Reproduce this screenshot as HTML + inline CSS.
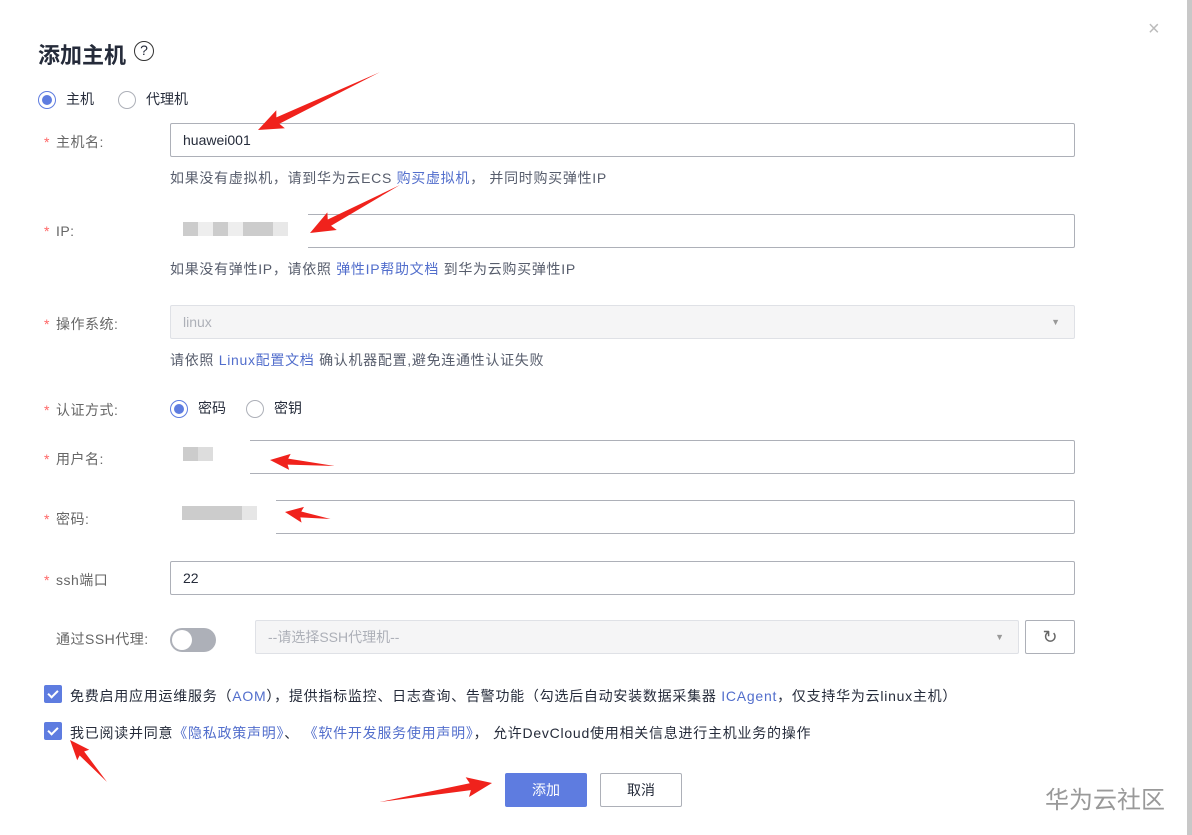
<!DOCTYPE html>
<html><head><meta charset="utf-8"><style>
*{box-sizing:border-box;margin:0;padding:0}
body{width:1192px;height:835px;background:#fff;font-family:"Liberation Sans","Noto Sans CJK SC",sans-serif;font-size:14px;color:#252b3a;position:relative;overflow:hidden}
.a{position:absolute}
.lbl{position:absolute;left:44px;color:#666;font-size:14px;letter-spacing:0.5px}
.lbl b{color:#f66;font-weight:normal;margin-right:6px}
.inp{position:absolute;left:170px;width:905px;height:34px;border:1px solid #adb0b8;border-radius:2px;padding-left:12px;line-height:32px;font-size:14px}
.hint{position:absolute;left:170px;color:#575d6c;font-size:14px;letter-spacing:0.7px}
.lk{color:#526ecc}
.radio{display:inline-block;width:18px;height:18px;border-radius:50%;border:1px solid #adb0b8;vertical-align:middle;position:relative;margin-right:10px}
.radio.on{border-color:#5e7ce0}
.radio.on:after{content:"";position:absolute;left:3px;top:3px;width:10px;height:10px;border-radius:50%;background:#5e7ce0}
.cb{position:absolute;left:44px;width:18px;height:18px;background:#5e7ce0;border-radius:2px}
.cb:after{content:"";position:absolute;left:6px;top:3px;width:4px;height:8px;border:solid #fff;border-width:0 2px 2px 0;transform:rotate(45deg)}
.t{letter-spacing:0.75px}
</style></head><body>
<div class="a" style="left:38px;top:38px;font-size:22px;font-weight:bold;color:#252b3a">添加主机</div>
<div class="a" style="left:134px;top:41px;width:20px;height:20px;border:1.5px solid #333;border-radius:50%;font-size:14px;text-align:center;line-height:17px">?</div>
<div class="a" style="left:1148px;top:18px;color:#bbb;font-size:20px">×</div>
<div class="a" style="left:1187px;top:0;width:5px;height:835px;background:#c8c8c8"></div>

<div class="a" style="left:38px;top:89px"><span class="radio on"></span>主机<span style="display:inline-block;width:24px"></span><span class="radio"></span>代理机</div>

<div class="lbl" style="top:132px"><b>*</b>主机名:</div>
<div class="inp" style="top:123px">huawei001</div>
<div class="hint" style="top:168px">如果没有虚拟机，请到华为云ECS <span class="lk">购买虚拟机</span>， 并同时购买弹性IP</div>

<div class="lbl" style="top:223px"><b>*</b>IP:</div>
<div class="inp" style="top:214px"></div>
<div class="a" style="left:168px;top:208px;width:140px;height:44px;background:#fff"></div>
<div class="a" style="left:183px;top:222px;width:105px;height:14px;background:linear-gradient(90deg,#ccc 0 15px,#eee 15px 30px,#ccc 30px 45px,#eee 45px 60px,#ccc 60px 90px,#e8e8e8 90px)"></div>
<div class="hint" style="top:259px">如果没有弹性IP，请依照 <span class="lk">弹性IP帮助文档</span> 到华为云购买弹性IP</div>

<div class="lbl" style="top:314px"><b>*</b>操作系统:</div>
<div class="inp" style="top:305px;background:#f5f5f6;border-color:#dfe1e6;color:#adb0b8">linux<span style="position:absolute;right:14px;top:0;font-size:9px;color:#999">▼</span></div>
<div class="hint" style="top:350px">请依照 <span class="lk">Linux配置文档</span> 确认机器配置,避免连通性认证失败</div>

<div class="lbl" style="top:400px"><b>*</b>认证方式:</div>
<div class="a" style="left:170px;top:398px"><span class="radio on"></span>密码<span style="display:inline-block;width:20px"></span><span class="radio"></span>密钥</div>

<div class="lbl" style="top:449px"><b>*</b>用户名:</div>
<div class="inp" style="top:440px"></div>
<div class="a" style="left:168px;top:436px;width:82px;height:42px;background:#fff"></div>
<div class="a" style="left:183px;top:447px;width:30px;height:14px;background:linear-gradient(90deg,#ccc 0 15px,#ddd 15px)"></div>

<div class="lbl" style="top:509px"><b>*</b>密码:</div>
<div class="inp" style="top:500px"></div>
<div class="a" style="left:168px;top:494px;width:108px;height:42px;background:#fff"></div>
<div class="a" style="left:182px;top:506px;width:75px;height:14px;background:linear-gradient(90deg,#ccc 0 60px,#e6e6e6 60px)"></div>

<div class="lbl" style="top:570px"><b>*</b>ssh端口</div>
<div class="inp" style="top:561px">22</div>

<div class="lbl" style="top:629px;left:56px">通过SSH代理:</div>
<div class="a" style="left:170px;top:628px;width:46px;height:24px;border-radius:12px;background:#adb0b8"><div style="position:absolute;left:2px;top:2px;width:20px;height:20px;border-radius:50%;background:#fff"></div></div>
<div class="a" style="left:255px;top:620px;width:764px;height:34px;background:#f5f5f6;border:1px solid #dfe1e6;border-radius:2px;padding-left:12px;line-height:32px;color:#adb0b8">--请选择SSH代理机--<span style="position:absolute;right:14px;font-size:9px;color:#999">▼</span></div>
<div class="a" style="left:1025px;top:620px;width:50px;height:34px;border:1px solid #adb0b8;border-radius:2px;text-align:center;line-height:32px;color:#666;font-size:18px">↻</div>

<div class="cb" style="top:685px"></div>
<div class="a t" style="left:70px;top:686px">免费启用应用运维服务（<span class="lk">AOM</span>），提供指标监控、日志查询、告警功能（勾选后自动安装数据采集器 <span class="lk">ICAgent</span>，仅支持华为云linux主机）</div>
<div class="cb" style="top:722px"></div>
<div class="a t" style="left:70px;top:723px">我已阅读并同意<span class="lk">《隐私政策声明》</span>、 <span class="lk">《软件开发服务使用声明》</span>， 允许DevCloud使用相关信息进行主机业务的操作</div>

<div class="a" style="left:505px;top:773px;width:82px;height:34px;background:#5e7ce0;color:#fff;border-radius:2px;text-align:center;line-height:34px">添加</div>
<div class="a" style="left:600px;top:773px;width:82px;height:34px;border:1px solid #adb0b8;border-radius:2px;text-align:center;line-height:32px">取消</div>
<div class="a" style="left:1045px;top:780px;font-size:24px;color:#999">华为云社区</div>

<svg class="a" style="left:0;top:0" width="1192" height="835">
<g fill="#f0221c">
<g transform="translate(258,130) rotate(154.6)"><polygon points="-135,0 -22,-3.5 -25,-10 0,0 -25,10 -22,3.5"/></g>
<g transform="translate(310,233) rotate(151.9)"><polygon points="-102,0 -22,-3.5 -25,-10 0,0 -25,10 -22,3.5"/></g>
<g transform="translate(270,460) rotate(185.3)"><polygon points="-65,0 -18,-3 -20,-8 0,0 -20,8 -18,3"/></g>
<g transform="translate(285,512) rotate(188.8)"><polygon points="-46,0 -16,-3 -18,-8 0,0 -18,8 -16,3"/></g>
<g transform="translate(70,740) rotate(-131.4)"><polygon points="-56,0 -18,-3 -20,-8 0,0 -20,8 -18,3"/></g>
<g transform="translate(492,783) rotate(-9.6)"><polygon points="-114,0 -22,-3.5 -25,-10 0,0 -25,10 -22,3.5"/></g>
</g></svg>
</body></html>
